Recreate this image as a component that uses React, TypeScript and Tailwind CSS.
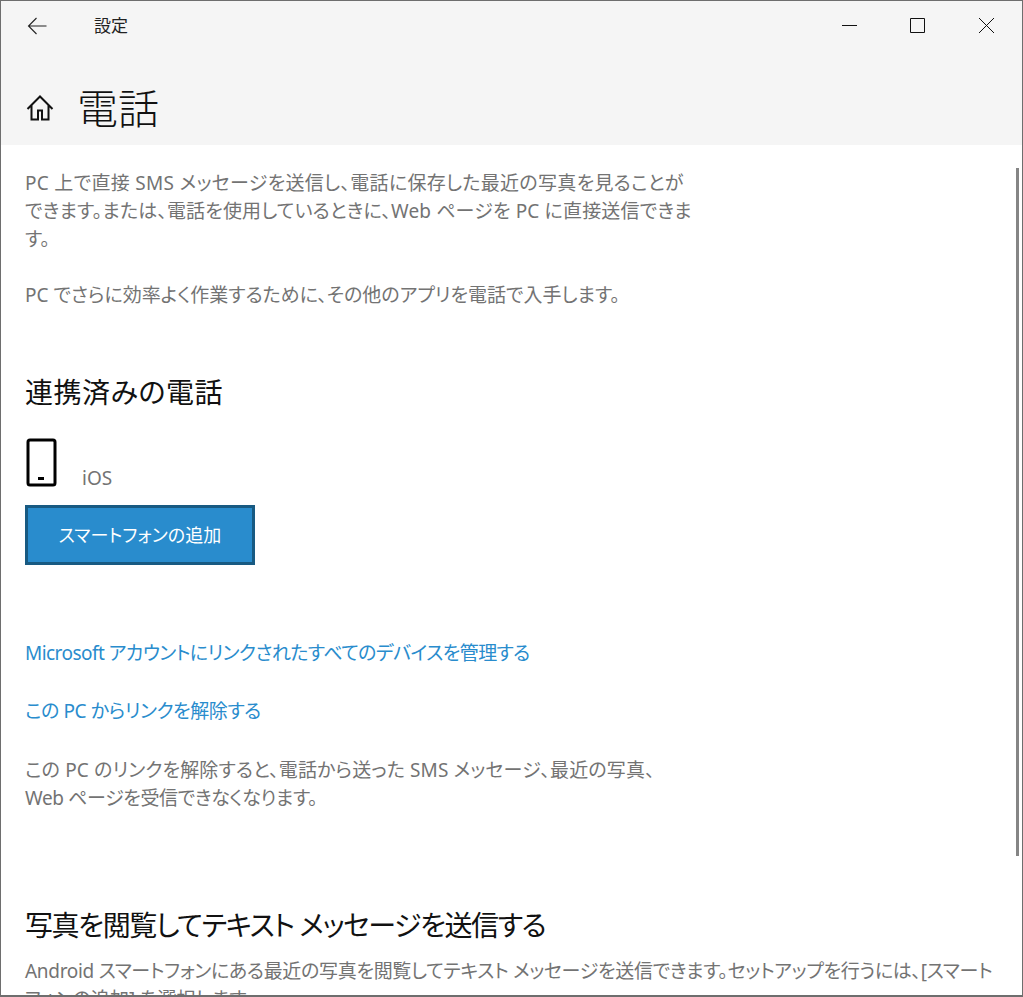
import React from 'react';

// 本文の行。折り返しは元画面に合わせて手動
const Line: React.FC<{ className?: string; children: React.ReactNode }> = ({ className = '', children }) => (
  <div className={`whitespace-nowrap ${className}`}>{children}</div>
);

export default function App() {
  return (
    <div className="relative flex h-[997px] w-[1023px] flex-col overflow-hidden border border-b-2 border-[#6e6e6e] bg-white font-['Noto_Sans','Noto_Sans_CJK_JP',sans-serif] [font-feature-settings:'palt']">
      {/* Header */}
      <header className="h-[144px] shrink-0 bg-[#f5f5f5]">
        <div className="flex h-[49px] items-center">
          <svg viewBox="0 0 20 18" className="ml-[26px] h-[18px] w-[20px]" fill="none" stroke="#222" strokeWidth="1.1">
            <path d="M19.5 9H1.5M9.5 1l-8 8 8 8" />
          </svg>
          <span className="ml-[47px] text-[17px] text-[#222]">設定</span>
          <div className="ml-auto flex items-center">
            <svg viewBox="0 0 15 15" className="h-[15px] w-[15px]" fill="none" stroke="#111" strokeWidth="1">
              <path d="M0 7.5h15" />
            </svg>
            <svg viewBox="0 0 15 15" className="ml-[53px] h-[15px] w-[15px]" fill="none" stroke="#111" strokeWidth="1">
              <path d="M.5.5h14v14H.5z" />
            </svg>
            <svg viewBox="0 0 15 15" className="ml-[54px] mr-[28px] h-[15px] w-[15px]" fill="none" stroke="#111" strokeWidth="1">
              <path d="M0 0l15 15M15 0 0 15" />
            </svg>
          </div>
        </div>
        <div className="mt-[38px] flex h-[40px] items-center">
          <svg viewBox="0 0 28 28" className="ml-[25px] h-[28px] w-[28px]" fill="none" stroke="#111" strokeWidth="2">
            <path d="M1.5 15 14 2.5 26.500 15M5.500 11.500V25.500h6.500v-9h4v9h6.500V11.500" />
          </svg>
          <h1 className="ml-[23px] text-[41px] font-light leading-none text-[#111]">電話</h1>
        </div>
      </header>

      {/* Content */}
      <main className="flex-1 px-[24px] pt-[24px] text-[19px] leading-[28px] text-[#737373]">
        <Line className="tracking-[0.3px]">PC 上で直接 SMS メッセージを送信し、電話に保存した最近の写真を見ることが</Line>
        <Line className="tracking-[0.15px]">できます。または、電話を使用しているときに、Web ページを PC に直接送信できま</Line>
        <Line>す。</Line>
        <Line className="mt-[28px]">PC でさらに効率よく作業するために、その他のアプリを電話で入手します。</Line>

        <h2 className="mt-[65px] text-[28px] leading-[36px] tracking-[0.5px] text-[#111]">連携済みの電話</h2>
        <div className="mt-[28px] flex items-end">
          <svg viewBox="0 0 32 50" className="h-[50px] w-[32px]" fill="none">
            <rect x="3" y="2" width="27" height="45" rx="2" stroke="#000" strokeWidth="3" />
            <rect x="13" y="39" width="6" height="3" fill="#000" />
          </svg>
          <span className="ml-[25px] translate-y-[4px]">iOS</span>
        </div>
        <button className="mt-[17px] block h-[60px] w-[230px] border-[3px] border-[#185a82] bg-[#298ccd] text-center text-[18px] tracking-[0.1px] text-white">
          スマートフォンの追加
        </button>

        <Line className="mt-[74px] tracking-[-0.55px] text-[#298ccd]">Microsoft アカウントにリンクされたすべてのデバイスを管理する</Line>
        <Line className="mt-[30px] tracking-[-0.4px] text-[#298ccd]">この PC からリンクを解除する</Line>
        <Line className="mt-[31px] tracking-[0.15px]">この PC のリンクを解除すると、電話から送った SMS メッセージ、最近の写真、</Line>
        <Line className="tracking-[-0.37px]">Web ページを受信できなくなります。</Line>

        <h2 className="mt-[95px] text-[28px] leading-[36px] tracking-[-1.4px] text-[#111]">写真を閲覧してテキスト メッセージを送信する</h2>
        <Line className="mt-[14px] tracking-[-0.31px]">Android スマートフォンにある最近の写真を閲覧してテキスト メッセージを送信できます。セットアップを行うには、[スマート</Line>
        <Line>フォンの追加] を選択します。</Line>
      </main>

      {/* Scrollbar */}
      <div className="absolute right-[3px] top-[167px] h-[688px] w-[3px] bg-[#858585]" />
    </div>
  );
}
